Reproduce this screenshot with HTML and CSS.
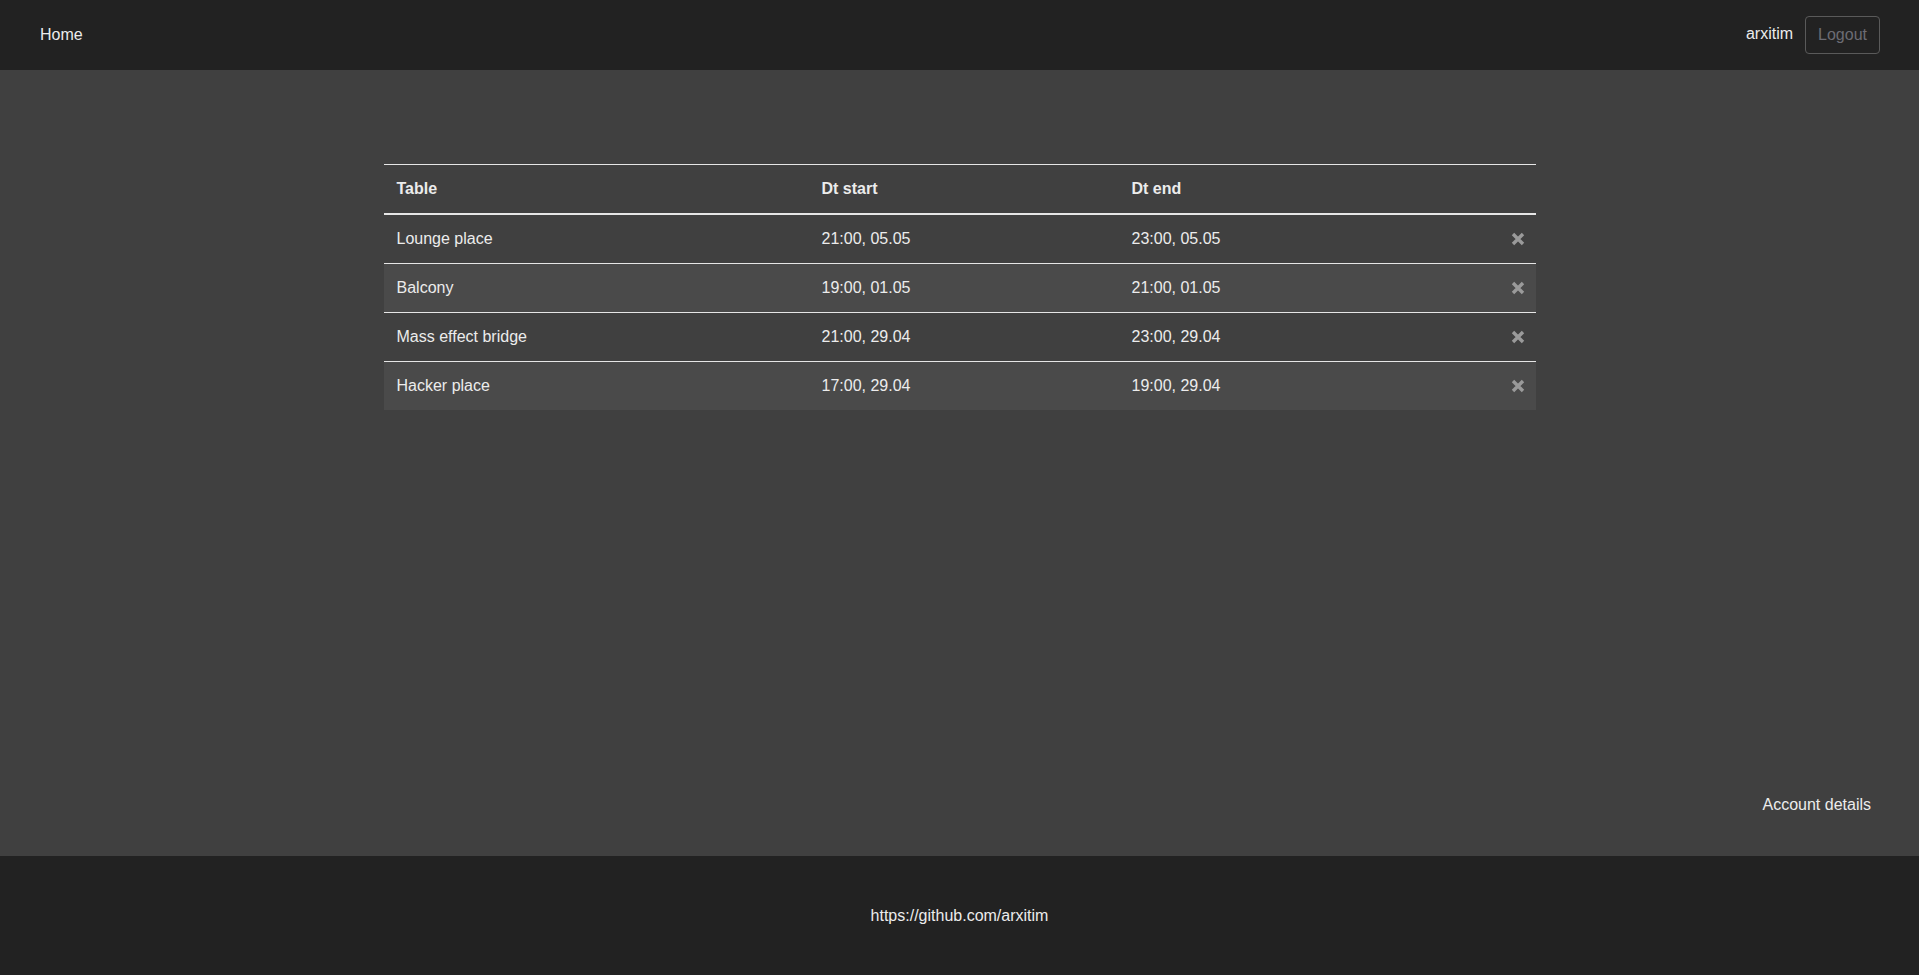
FILE: index.html
```html
<!DOCTYPE html>
<html lang="en">
<head>
<meta charset="utf-8">
<title>Bookings</title>
<link rel="stylesheet" href="styles.css">
</head>
<body>
<nav class="navbar">
  <a class="nav-link" href="#">Home</a>
  <div class="nav-right">
    <span class="username">arxitim</span>
    <button class="btn-logout">Logout</button>
  </div>
</nav>
<main class="main">
  <div class="table-wrap">
    <table class="bookings">
      <colgroup>
        <col class="c1"><col class="c2"><col class="c3"><col class="c4">
      </colgroup>
      <thead>
        <tr><th>Table</th><th>Dt start</th><th>Dt end</th><th></th></tr>
      </thead>
      <tbody>
        <tr><td>Lounge place</td><td>21:00, 05.05</td><td>23:00, 05.05</td><td class="act"><svg class="x" viewBox="0 0 14 14" width="14" height="14"><path d="M2 2L12 12M12 2L2 12"/></svg></td></tr>
        <tr class="alt"><td>Balcony</td><td>19:00, 01.05</td><td>21:00, 01.05</td><td class="act"><svg class="x" viewBox="0 0 14 14" width="14" height="14"><path d="M2 2L12 12M12 2L2 12"/></svg></td></tr>
        <tr><td>Mass effect bridge</td><td>21:00, 29.04</td><td>23:00, 29.04</td><td class="act"><svg class="x" viewBox="0 0 14 14" width="14" height="14"><path d="M2 2L12 12M12 2L2 12"/></svg></td></tr>
        <tr class="alt last"><td>Hacker place</td><td>17:00, 29.04</td><td>19:00, 29.04</td><td class="act"><svg class="x" viewBox="0 0 14 14" width="14" height="14"><path d="M2 2L12 12M12 2L2 12"/></svg></td></tr>
      </tbody>
    </table>
  </div>
  <div class="account-row">
    <a class="account-link" href="#">Account details</a>
  </div>
</main>
<footer class="footer">
  <span>https://github.com/arxitim</span>
</footer>
</body>
</html>
```

FILE: styles.css
```css
* { box-sizing: border-box; }
html, body { margin: 0; padding: 0; }
body {
  font-family: "Liberation Sans", Arial, sans-serif;
  font-size: 16px;
  line-height: 1.5;
  color: #ececec;
  background: #404040;
  min-height: 975px;
  display: flex;
  flex-direction: column;
}
a { color: #ececec; text-decoration: none; }
.navbar {
  height: 70px;
  background: #222222;
  display: flex;
  align-items: center;
  justify-content: space-between;
  padding: 0 39px 0 40px;
}
.nav-right { display: flex; align-items: center; }
.username { margin-right: 12px; margin-top: -2px; }
.btn-logout {
  font-family: "Liberation Sans", Arial, sans-serif;
  font-size: 16px;
  line-height: 24px;
  padding: 6px 12px;
  height: 38px;
  color: #6c6c74;
  background: transparent;
  border: 1px solid #5a5a5a;
  border-radius: 4px;
}
.main {
  flex: 1;
  display: flex;
  flex-direction: column;
  padding-top: 94px;
}
.table-wrap {
  width: 1152px;
  margin: 0 auto;
  flex: 1;
}
.bookings {
  width: 100%;
  border-collapse: collapse;
  border-top: 1px solid #e6e6e6;
}
.bookings col.c1 { width: 425px; }
.bookings col.c2 { width: 310px; }
.bookings col.c4 { width: 40px; }
.bookings th, .bookings td {
  padding: 12px 12px 12px 13px;
  text-align: left;
  line-height: 24px;
  height: 48px;
}
.bookings th { font-weight: bold; border-bottom: 2px solid #e6e6e6; }
.bookings td { border-bottom: 1px solid #e6e6e6; }
.bookings tr.last td { border-bottom: none; }
.bookings tr.alt td { background: #4a4a4a; }
.bookings td.act { text-align: right; padding-right: 11px; }
.x { display: inline-block; vertical-align: middle; margin-top: -1px; }
.x path { stroke: #9a9a9a; stroke-width: 3.4; stroke-linecap: butt; fill: none; }
.account-row {
  display: flex;
  justify-content: flex-end;
  padding: 0 48px 39px 0;
}
.footer {
  height: 119px;
  background: #222222;
  display: flex;
  align-items: center;
  justify-content: center;
}
```
